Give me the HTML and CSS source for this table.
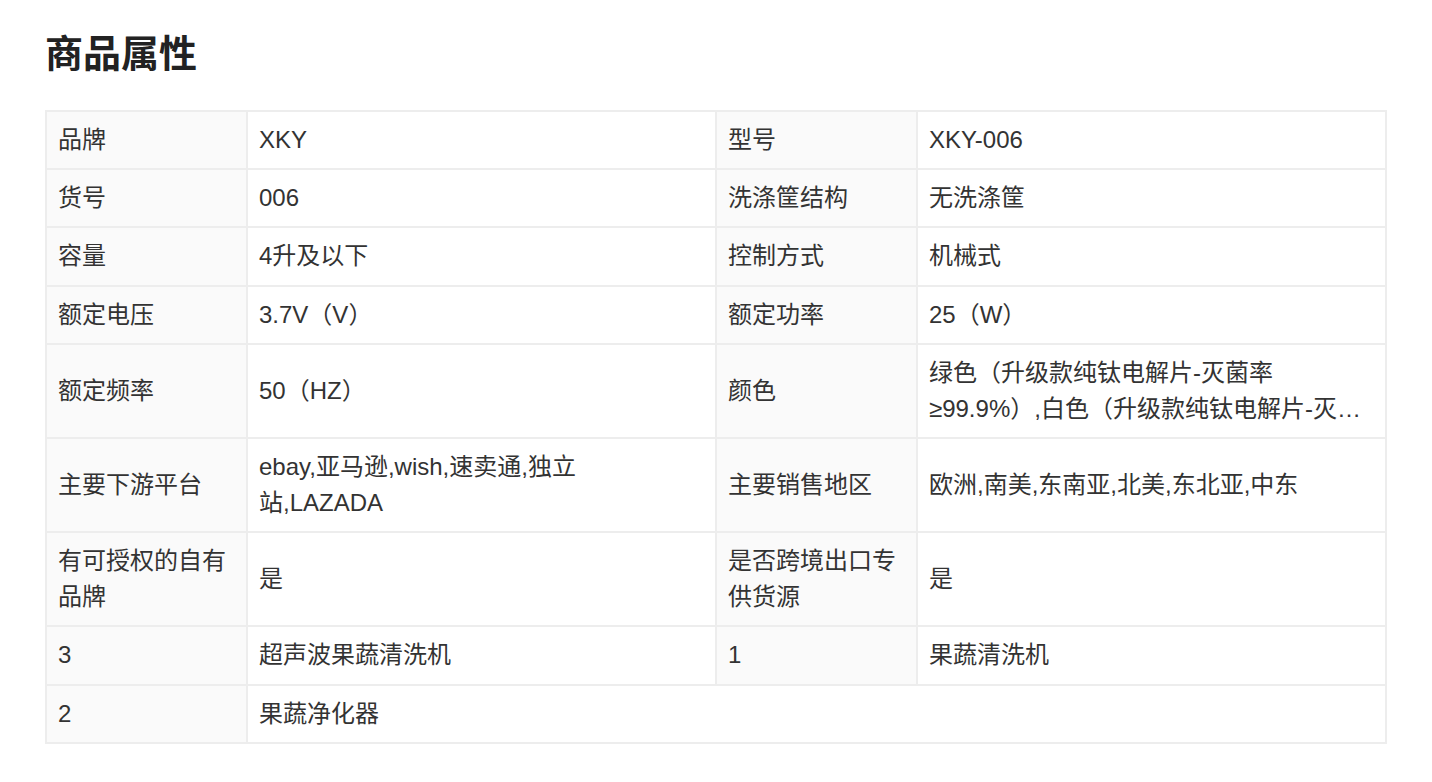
FILE: index.html
```html
<!DOCTYPE html>
<html lang="zh-CN">
<head>
<meta charset="utf-8">
<title>商品属性</title>
<link rel="stylesheet" href="styles.css">
</head>
<body>
<div class="page">
  <h2 class="title">商品属性</h2>
  <table class="attrs">
    <colgroup>
      <col class="c-label"><col class="c-value"><col class="c-label"><col class="c-value">
    </colgroup>
    <tbody>
      <tr><td class="k">品牌</td><td class="v">XKY</td><td class="k">型号</td><td class="v">XKY-006</td></tr>
      <tr><td class="k">货号</td><td class="v">006</td><td class="k">洗涤筐结构</td><td class="v">无洗涤筐</td></tr>
      <tr><td class="k">容量</td><td class="v">4升及以下</td><td class="k">控制方式</td><td class="v">机械式</td></tr>
      <tr><td class="k">额定电压</td><td class="v">3.7V（V）</td><td class="k">额定功率</td><td class="v">25（W）</td></tr>
      <tr><td class="k">额定频率</td><td class="v">50（HZ）</td><td class="k">颜色</td><td class="v"><span class="line">绿色（升级款纯钛电解片-灭菌率</span><span class="line clip">≥99.9%）,白色（升级款纯钛电解片-灭菌率≥99.9%）</span></td></tr>
      <tr><td class="k">主要下游平台</td><td class="v">ebay,亚马逊,wish,速卖通,独立<br>站,LAZADA</td><td class="k">主要销售地区</td><td class="v">欧洲,南美,东南亚,北美,东北亚,中东</td></tr>
      <tr><td class="k">有可授权的自有<br>品牌</td><td class="v">是</td><td class="k">是否跨境出口专<br>供货源</td><td class="v">是</td></tr>
      <tr><td class="k">3</td><td class="v">超声波果蔬清洗机</td><td class="k">1</td><td class="v">果蔬清洗机</td></tr>
      <tr><td class="k">2</td><td class="v" colspan="3">果蔬净化器</td></tr>
    </tbody>
  </table>
</div>
</body>
</html>
```

FILE: styles.css
```css
html, body {
  margin: 0;
  padding: 0;
  background: #ffffff;
}
body {
  font-family: "Liberation Sans", "Noto Sans CJK SC", sans-serif;
  color: #333333;
}
.page {
  padding: 24px 45px 30px 45px;
}
.title {
  margin: 0 0 33px 0;
  font-size: 38px;
  line-height: 53px;
  font-weight: 700;
  color: #222222;
  font-family: "Noto Sans CJK SC", sans-serif;
}
.attrs {
  width: 100%;
  border-collapse: collapse;
  table-layout: fixed;
  font-size: 24px;
  line-height: 36px;
}
.c-label { width: 15%; }
.c-value { width: 35%; }
.attrs td {
  border: 2px solid #ededed;
  padding: 10.1px 11px;
  vertical-align: middle;
  text-align: left;
}
.attrs td.k {
  background: #fafafa;
}
.attrs td.v {
  background: #ffffff;
}
.line {
  display: block;
}
.clip {
  white-space: nowrap;
  overflow: hidden;
  text-overflow: ellipsis;
}
```
